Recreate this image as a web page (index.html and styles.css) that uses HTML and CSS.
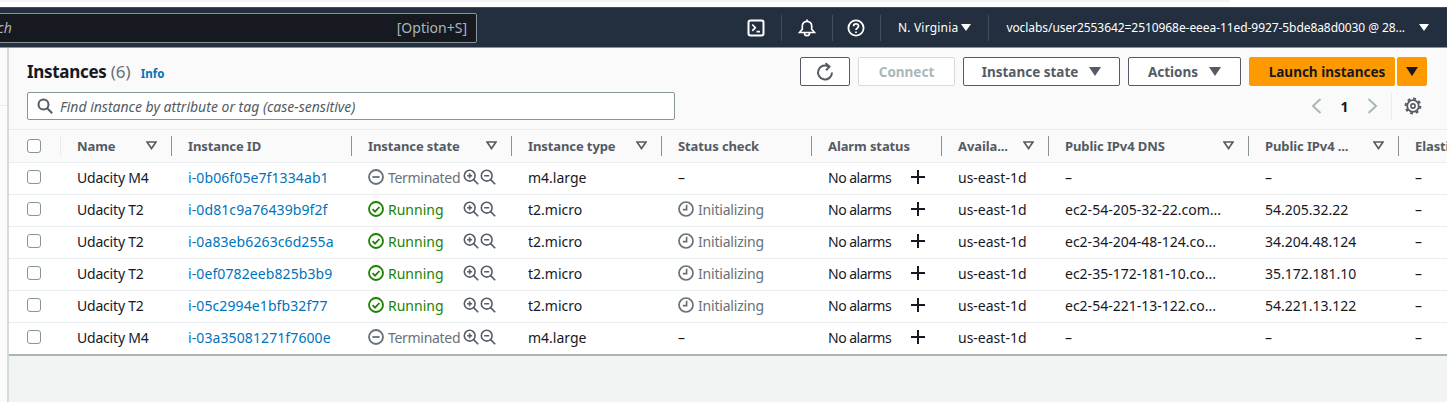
FILE: index.html
```html
<!DOCTYPE html>
<html lang="en">
<head>
    <meta charset="UTF-8">
    <title>Instances | EC2 Console</title>
    <link rel="stylesheet" href="styles.css">
</head>
<body>

<svg class="sprites" width="0" height="0">
    <symbol id="i-sort" viewBox="0 0 11 9"><path d="M1 1h9L5.5 7.5z" fill="none" stroke="#545b64" stroke-width="1.6"/></symbol>
    <symbol id="i-zoomin" viewBox="0 0 16 16"><g fill="none" stroke="#545b64" stroke-width="1.6"><circle cx="6.7" cy="6.7" r="5.4"/><path d="M10.6 10.6l4.6 4.6M4.2 6.7h5M6.7 4.2v5"/></g></symbol>
    <symbol id="i-zoomout" viewBox="0 0 16 16"><g fill="none" stroke="#545b64" stroke-width="1.6"><circle cx="6.7" cy="6.7" r="5.4"/><path d="M10.6 10.6l4.6 4.6M4.2 6.7h5"/></g></symbol>
    <symbol id="i-plus" viewBox="0 0 16 16"><path d="M8 1v14M1 8h14" stroke="#16191f" stroke-width="2"/></symbol>
    <symbol id="i-clock" viewBox="0 0 16 16"><g fill="none" stroke="#687078" stroke-width="1.7"><circle cx="8" cy="8" r="7"/><path d="M8.6 3.8v4.8H4.8"/></g></symbol>
    <symbol id="i-running" viewBox="0 0 16 16"><g fill="none" stroke="#1d8102" stroke-width="1.8"><circle cx="8" cy="8" r="7"/><path d="M4.6 8.2l2.4 2.4 4.4-4.6"/></g></symbol>
    <symbol id="i-stopped" viewBox="0 0 16 16"><g fill="none" stroke="#687078" stroke-width="1.8"><circle cx="8" cy="8" r="7"/><path d="M4.4 8h7.2"/></g></symbol>
</svg>

<div class="topstrip"><div class="topstrip-tab"></div></div>

<nav class="navbar">
    <div class="searchbox">
        <span class="searchbox-text">Search</span>
        <span>[Option+S]</span>
    </div>
    <div class="navitems">
        <div class="navitem nav-icon">
            <svg width="18" height="18" viewBox="0 0 18 18" fill="none" stroke="#fff" stroke-width="2"><rect x="1.5" y="1.5" width="15" height="15" rx="2"/><path d="M5.3 5.5l3 3.2-3 3.2M9.5 12.6h3.5" stroke-width="1.7"/></svg>
        </div>
        <div class="navitem nav-icon nav-bell">
            <svg width="18" height="18" viewBox="0 0 18 18" fill="none" stroke="#fff" stroke-width="1.7"><path d="M1.5 13.5h15l-2.8-3.2V7a4.7 4.7 0 0 0-9.4 0v3.3zM6.5 14c0 3.6 5 3.6 5 0M9 2.3V.6"/></svg>
        </div>
        <div class="navitem nav-icon nav-help">
            <svg width="18" height="18" viewBox="0 0 18 18" fill="none" stroke="#fff" stroke-width="1.8"><circle cx="9" cy="9" r="7.6"/><path d="M6.6 7.2c0-3.1 4.9-3.1 4.9-.1 0 2-2.5 2-2.5 4"/><path d="M9 12.4v1.6"/></svg>
        </div>
        <div class="navitem nav-region">N. Virginia <span class="nav-caret"></span></div>
        <div class="navitem nav-user">voclabs/user2553642=2510968e-eeea-11ed-9927-5bde8a8d0030 @ 28... <span class="nav-caret"></span></div>
    </div>
</nav>

<div class="main">
    <div class="sidebar"><div class="sidebar-top"></div></div>
    <div class="content">
        <div class="panel">
            <div class="panel-header">
                <div class="header-left">
                    <h1>Instances <span class="count">(6)</span> <a class="info" href="#">Info</a></h1>
                    <div class="filter">
                        <svg width="16" height="16" viewBox="0 0 16 16" fill="none" stroke="#545b64" stroke-width="2"><circle cx="6.5" cy="6.5" r="5"/><path d="M10.2 10.2l5 5"/></svg>
                        <span>Find instance by attribute or tag (case-sensitive)</span>
                    </div>
                </div>
                <div class="header-right">
                    <div class="actions">
                        <button class="btn btn-refresh">
                            <svg width="18" height="20" viewBox="0 0 18 20" fill="none" stroke="#545b64" stroke-width="2"><path d="M12.8 4.6A7 7 0 1 0 16 10.5"/><path d="M9.5 1.2l4 3.4-3.4 3.6"/></svg>
                        </button>
                        <button class="btn btn-connect">Connect</button>
                        <button class="btn btn-state">Instance state <span class="caret"></span></button>
                        <button class="btn btn-actions">Actions <span class="caret"></span></button>
                        <div class="launch">
                            <button class="btn btn-launch">Launch instances</button>
                            <button class="btn btn-launch-more"><span class="caret caret-dark"></span></button>
                        </div>
                    </div>
                    <div class="pager">
                        <svg width="12" height="16" viewBox="0 0 12 16" fill="none" stroke="#aab7b8" stroke-width="2"><path d="M9.5 1L2 8l7.5 7"/></svg>
                        <span class="page-num">1</span>
                        <svg width="12" height="16" viewBox="0 0 12 16" fill="none" stroke="#aab7b8" stroke-width="2"><path d="M2.5 1L10 8l-7.5 7"/></svg>
                        <span class="pager-sep"></span>
                        <svg width="18" height="18" viewBox="0 0 18 18" fill="none" stroke="#545b64"><circle cx="9" cy="9" r="5.8" stroke-width="1.8"/><circle cx="9" cy="9" r="7.4" stroke-width="2" stroke-dasharray="2.8 3"/><circle cx="9" cy="9" r="2.1" stroke-width="1.6"/></svg>
                    </div>
                </div>
            </div>

            <table class="instances">
                <colgroup>
                    <col class="c-check"><col class="c-name"><col class="c-id"><col class="c-state"><col class="c-type"><col class="c-status"><col class="c-alarm"><col class="c-az"><col class="c-dns"><col class="c-ip"><col class="c-elastic">
                </colgroup>
                <thead>
                    <tr>
                        <th class="cell-check"><div class="th-check"><span class="checkbox"></span></div></th>
                        <th><div class="th-inner"><span>Name</span><svg class="sort"><use href="#i-sort"/></svg></div></th>
                        <th><div class="th-inner"><span>Instance ID</span></div></th>
                        <th><div class="th-inner"><span>Instance state</span><svg class="sort"><use href="#i-sort"/></svg></div></th>
                        <th><div class="th-inner"><span>Instance type</span><svg class="sort"><use href="#i-sort"/></svg></div></th>
                        <th><div class="th-inner"><span>Status check</span></div></th>
                        <th><div class="th-inner"><span>Alarm status</span></div></th>
                        <th><div class="th-inner"><span>Availa...</span><svg class="sort"><use href="#i-sort"/></svg></div></th>
                        <th><div class="th-inner"><span>Public IPv4 DNS</span><svg class="sort"><use href="#i-sort"/></svg></div></th>
                        <th><div class="th-inner"><span>Public IPv4 ...</span><svg class="sort"><use href="#i-sort"/></svg></div></th>
                        <th><div class="th-inner"><span>Elastic IP</span></div></th>
                    </tr>
                </thead>
                <tbody>
                    <tr>
                        <td class="cell-check"><span class="checkbox"></span></td>
                        <td class="name">Udacity M4</td>
                        <td><a class="link" href="#">i-0b06f05e7f1334ab1</a></td>
                        <td><div class="state-cell"><span class="state stopped"><svg class="ico"><use href="#i-stopped"/></svg>Terminated</span><span class="zooms"><svg class="ico"><use href="#i-zoomin"/></svg><svg class="ico"><use href="#i-zoomout"/></svg></span></div></td>
                        <td>m4.large</td>
                        <td>–</td>
                        <td><div class="alarm-cell"><span>No alarms</span><svg class="ico"><use href="#i-plus"/></svg></div></td>
                        <td>us-east-1d</td>
                        <td>–</td>
                        <td>–</td>
                        <td>–</td>
                    </tr>
                    <tr>
                        <td class="cell-check"><span class="checkbox"></span></td>
                        <td class="name">Udacity T2</td>
                        <td><a class="link" href="#">i-0d81c9a76439b9f2f</a></td>
                        <td><div class="state-cell"><span class="state running"><svg class="ico"><use href="#i-running"/></svg>Running</span><span class="zooms"><svg class="ico"><use href="#i-zoomin"/></svg><svg class="ico"><use href="#i-zoomout"/></svg></span></div></td>
                        <td>t2.micro</td>
                        <td><span class="check stopped"><svg class="ico"><use href="#i-clock"/></svg>Initializing</span></td>
                        <td><div class="alarm-cell"><span>No alarms</span><svg class="ico"><use href="#i-plus"/></svg></div></td>
                        <td>us-east-1d</td>
                        <td>ec2-54-205-32-22.com...</td>
                        <td>54.205.32.22</td>
                        <td>–</td>
                    </tr>
                    <tr>
                        <td class="cell-check"><span class="checkbox"></span></td>
                        <td class="name">Udacity T2</td>
                        <td><a class="link" href="#">i-0a83eb6263c6d255a</a></td>
                        <td><div class="state-cell"><span class="state running"><svg class="ico"><use href="#i-running"/></svg>Running</span><span class="zooms"><svg class="ico"><use href="#i-zoomin"/></svg><svg class="ico"><use href="#i-zoomout"/></svg></span></div></td>
                        <td>t2.micro</td>
                        <td><span class="check stopped"><svg class="ico"><use href="#i-clock"/></svg>Initializing</span></td>
                        <td><div class="alarm-cell"><span>No alarms</span><svg class="ico"><use href="#i-plus"/></svg></div></td>
                        <td>us-east-1d</td>
                        <td>ec2-34-204-48-124.co...</td>
                        <td>34.204.48.124</td>
                        <td>–</td>
                    </tr>
                    <tr>
                        <td class="cell-check"><span class="checkbox"></span></td>
                        <td class="name">Udacity T2</td>
                        <td><a class="link" href="#">i-0ef0782eeb825b3b9</a></td>
                        <td><div class="state-cell"><span class="state running"><svg class="ico"><use href="#i-running"/></svg>Running</span><span class="zooms"><svg class="ico"><use href="#i-zoomin"/></svg><svg class="ico"><use href="#i-zoomout"/></svg></span></div></td>
                        <td>t2.micro</td>
                        <td><span class="check stopped"><svg class="ico"><use href="#i-clock"/></svg>Initializing</span></td>
                        <td><div class="alarm-cell"><span>No alarms</span><svg class="ico"><use href="#i-plus"/></svg></div></td>
                        <td>us-east-1d</td>
                        <td>ec2-35-172-181-10.co...</td>
                        <td>35.172.181.10</td>
                        <td>–</td>
                    </tr>
                    <tr>
                        <td class="cell-check"><span class="checkbox"></span></td>
                        <td class="name">Udacity T2</td>
                        <td><a class="link" href="#">i-05c2994e1bfb32f77</a></td>
                        <td><div class="state-cell"><span class="state running"><svg class="ico"><use href="#i-running"/></svg>Running</span><span class="zooms"><svg class="ico"><use href="#i-zoomin"/></svg><svg class="ico"><use href="#i-zoomout"/></svg></span></div></td>
                        <td>t2.micro</td>
                        <td><span class="check stopped"><svg class="ico"><use href="#i-clock"/></svg>Initializing</span></td>
                        <td><div class="alarm-cell"><span>No alarms</span><svg class="ico"><use href="#i-plus"/></svg></div></td>
                        <td>us-east-1d</td>
                        <td>ec2-54-221-13-122.co...</td>
                        <td>54.221.13.122</td>
                        <td>–</td>
                    </tr>
                    <tr>
                        <td class="cell-check"><span class="checkbox"></span></td>
                        <td class="name">Udacity M4</td>
                        <td><a class="link" href="#">i-03a35081271f7600e</a></td>
                        <td><div class="state-cell"><span class="state stopped"><svg class="ico"><use href="#i-stopped"/></svg>Terminated</span><span class="zooms"><svg class="ico"><use href="#i-zoomin"/></svg><svg class="ico"><use href="#i-zoomout"/></svg></span></div></td>
                        <td>m4.large</td>
                        <td>–</td>
                        <td><div class="alarm-cell"><span>No alarms</span><svg class="ico"><use href="#i-plus"/></svg></div></td>
                        <td>us-east-1d</td>
                        <td>–</td>
                        <td>–</td>
                        <td>–</td>
                    </tr>
                </tbody>
            </table>
        </div>
    </div>
</div>

</body>
</html>
```

FILE: styles.css
```css
* {
    box-sizing: border-box;
}
html, body {
    height: 100%;
}
body {
    font-family: 'Noto Sans', sans-serif;
    margin: 0;
    background-color: #f2f3f3;
    color: #16191f;
    overflow: hidden;
}
.sprites {
    display: block;
    height: 0;
}
.topstrip {
    height: 7px;
    background-color: #fff;
}
.topstrip-tab {
    width: 1230px;
    height: 2px;
    background-color: #f4f4f4;
    border-bottom-right-radius: 4px;
}
.navbar {
    display: flex;
    align-items: center;
    height: 41px;
    background-color: #232f3e;
    border-top: 1px solid #414d5c;
    border-bottom: 1px solid #879596;
}
.searchbox {
    display: flex;
    align-items: center;
    justify-content: space-between;
    width: 516px;
    height: 30px;
    margin-left: -39px;
    padding: 0 9px 0 8px;
    background-color: #16191f;
    border: 1px solid #879596;
    border-radius: 2px;
    color: #aab7b8;
    font-size: 14px;
}
.searchbox-text {
    font-style: italic;
}
.navitems {
    display: flex;
    align-items: center;
    margin-left: auto;
    height: 100%;
    color: #fff;
    font-size: 12px;
}
.navitem {
    display: flex;
    align-items: center;
    height: 26px;
    border-left: 1px solid #414d5c;
}
.navitem:first-child {
    border-left: none;
}
.nav-icon {
    justify-content: center;
    width: 50px;
}
.nav-bell {
    width: 51px;
}
.nav-help {
    width: 48px;
}
.nav-region {
    gap: 3px;
    padding: 0 17px;
    letter-spacing: 0.2px;
}
.nav-user {
    gap: 14px;
    padding: 0 18px 0 17px;
    letter-spacing: -0.07px;
}
.nav-caret {
    width: 0;
    height: 0;
    border-left: 5px solid transparent;
    border-right: 5px solid transparent;
    border-top: 7px solid #fff;
}
.main {
    display: flex;
    height: 354px;
}
.sidebar {
    flex: none;
    width: 7px;
    height: 354px;
    background-color: #fbfbfb;
}
.sidebar-top {
    height: 58px;
    border-bottom: 1px solid #eaeded;
}
.content {
    flex: 1;
    min-width: 0;
    height: 354px;
    border-left: 2px solid #d5dbdb;
}
.panel {
    background-color: #fff;
    border-bottom: 2px solid #aab7b8;
    overflow: hidden;
}
.panel-header {
    display: flex;
    justify-content: space-between;
    height: 82px;
    padding: 9px 20px 0 18px;
    background-color: #fafafa;
    border-bottom: 1px solid #eaeded;
}
h1 {
    margin: 0 0 5px;
    height: 30px;
    font-size: 17px;
    font-weight: 700;
    line-height: 30px;
    letter-spacing: -0.3px;
}
.count {
    color: #687078;
    font-weight: 400;
    letter-spacing: 0;
}
.info {
    margin-left: 6px;
    color: #0073bb;
    font-size: 11.5px;
    letter-spacing: 0;
    text-decoration: none;
}
.filter {
    display: flex;
    align-items: center;
    gap: 7px;
    width: 648px;
    height: 28px;
    padding-left: 9px;
    background-color: #fff;
    border: 1px solid #879596;
    border-radius: 2px;
    color: #545b64;
    font-size: 14px;
    font-style: italic;
}
.header-right {
    display: flex;
    flex-direction: column;
    align-items: flex-end;
}
.actions {
    display: flex;
    gap: 8px;
}
.btn {
    display: inline-flex;
    align-items: center;
    justify-content: center;
    height: 29px;
    padding: 0;
    background-color: #fff;
    border: 1px solid #545b64;
    border-radius: 2px;
    color: #545b64;
    font-family: inherit;
    font-size: 13.5px;
    font-weight: 700;
}
.btn-refresh {
    width: 50px;
}
.btn-connect {
    width: 97px;
    border-color: #d5dbdb;
    color: #aab7b8;
}
.btn-state {
    width: 157px;
    gap: 11px;
}
.btn-actions {
    width: 113px;
    gap: 11px;
}
.caret {
    width: 0;
    height: 0;
    border-left: 6px solid transparent;
    border-right: 6px solid transparent;
    border-top: 9px solid #545b64;
}
.caret-dark {
    border-top-color: #16191f;
}
.launch {
    display: flex;
    gap: 2px;
}
.btn-launch {
    width: 146px;
    padding-left: 10px;
    background-color: #ff9900;
    border-color: #ff9900;
    color: #16191f;
}
.btn-launch-more {
    width: 30px;
    background-color: #ff9900;
    border-color: #ff9900;
}
.pager {
    display: flex;
    align-items: center;
    height: 28px;
    margin-top: 6px;
    margin-right: 5px;
    color: #16191f;
    font-size: 14px;
    font-weight: 700;
}
.page-num {
    width: 43px;
    text-align: center;
}
.pager-sep {
    width: 1px;
    height: 27px;
    margin: 0 12px 0 13px;
    background-color: #eaeded;
}
table.instances {
    table-layout: fixed;
    width: 1489px;
    border-collapse: collapse;
    font-size: 14px;
}
.c-check { width: 52px; }
.c-name { width: 111px; }
.c-id { width: 180px; }
.c-state { width: 160px; }
.c-type { width: 150px; }
.c-status { width: 150px; }
.c-alarm { width: 130px; }
.c-az { width: 107px; }
.c-dns { width: 200px; }
.c-ip { width: 150px; }
.c-elastic { width: 99px; }
th {
    height: 32px;
    padding: 0 0 0 16px;
    background-color: #fafafa;
    border-bottom: 1px solid #eaeded;
    color: #545b64;
    font-size: 13px;
    font-weight: 700;
    letter-spacing: -0.1px;
    text-align: left;
    white-space: nowrap;
}
.th-inner {
    display: flex;
    align-items: center;
    justify-content: space-between;
    padding-right: 14px;
    height: 20px;
    border-right: 1px solid #879596;
}
th:last-child .th-inner {
    border-right: none;
}
.th-check {
    display: flex;
    align-items: center;
    height: 20px;
    border-right: 1px solid #eaeded;
}
.sort {
    width: 11px;
    height: 9px;
}
th.cell-check {
    padding: 0 0 0 18px;
}
td.cell-check {
    padding: 0 0 2px 18px;
}
td {
    height: 32px;
    padding: 0 0 2px 16px;
    border-bottom: 1px solid #eaeded;
    white-space: nowrap;
    overflow: hidden;
}
tr:last-child td {
    border-bottom: none;
}
.checkbox {
    display: block;
    width: 14px;
    height: 14px;
    background-color: #fff;
    border: 1px solid #879596;
    border-radius: 3px;
}
.name {
    letter-spacing: -0.2px;
}
.link {
    color: #0073bb;
    letter-spacing: 0.1px;
    text-decoration: none;
}
.ico {
    flex: none;
    width: 16px;
    height: 16px;
}
.state {
    display: flex;
    align-items: center;
    gap: 4px;
    width: 95px;
}
.check {
    display: flex;
    align-items: center;
    gap: 4px;
    letter-spacing: -0.2px;
}
.running {
    color: #1d8102;
}
.stopped {
    color: #687078;
}
.state.stopped {
    letter-spacing: -0.3px;
}
.state-cell {
    display: flex;
    align-items: center;
}
.zooms {
    display: flex;
    gap: 1px;
}
.alarm-cell {
    display: flex;
    align-items: center;
    justify-content: space-between;
    width: 98px;
}
.alarm-cell span {
    letter-spacing: -0.5px;
}
```
